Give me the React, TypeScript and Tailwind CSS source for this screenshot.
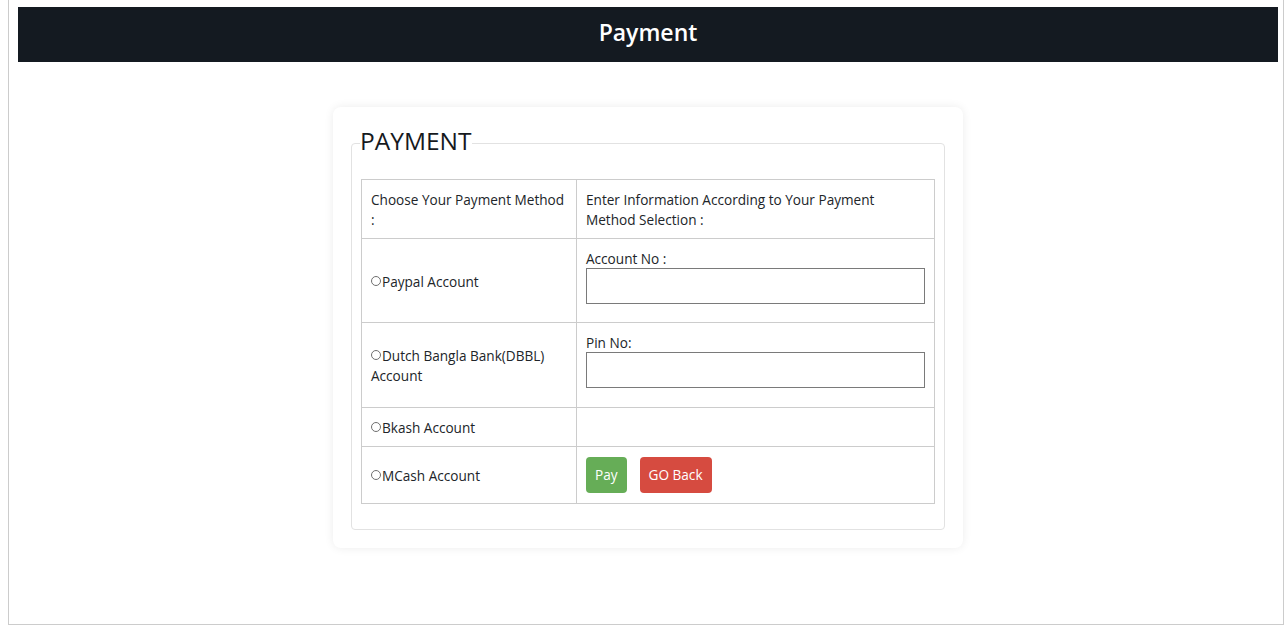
import React from 'react';

const methods = ['Paypal Account', 'Dutch Bangla Bank(DBBL) Account', 'Bkash Account', 'MCash Account'];

function Radio({ label }: { label: string }) {
  return (
    <span>
      <span className="inline-block w-[10px] h-[10px] rounded-full border border-[#6f6f6f] bg-white mr-px mb-[1px]"></span>
      {label}
    </span>
  );
}

function App() {
  return (
    <div className="bg-white font-['Open_Sans','Noto_Sans',sans-serif] text-[#212529] text-[13.6px] leading-[20px]">
      <div className="ml-2 w-[1276px] h-[625px] border-l border-r border-b border-[#cccccc] pl-[9px] pr-[5px] pt-[7px]">
        <div className="w-[1260px]">
          <div className="h-[55px] bg-[#141a21] flex items-center justify-center pb-[4px]">
            <h1 className="text-white text-[23px] font-semibold leading-none">Payment</h1>
          </div>

          <div className="mx-auto mt-[45px] w-[630px] rounded-lg bg-white shadow-[0_0_10px_rgba(0,0,0,0.08)] px-[18px] pt-[20px] pb-[18px]">
            <fieldset className="border border-[#e2e2e2] rounded pl-[9px] pr-[8px] pb-[25px]">
              <legend className="text-[24.5px] leading-[28px] pb-[4px] font-medium text-[#16191d] ml-[-1px]">PAYMENT</legend>
              <table className="mt-[20px] w-[574px] border-collapse">
                <tbody>
                  <tr className="h-[59px]">
                    <td className="w-[215px] border border-[#cccccc] px-[9px] pt-[10px] pb-[8px] align-middle">
                      Choose Your Payment Method :
                    </td>
                    <td className="border border-[#cccccc] px-[9px] pt-[10px] pb-[8px] align-middle">
                      Enter Information According to Your Payment Method Selection :
                    </td>
                  </tr>
                  <tr className="h-[84px]">
                    <td className="border border-[#cccccc] px-[9px] pt-[2px] align-middle">
                      <Radio label={methods[0]} />
                    </td>
                    <td className="border border-[#cccccc] px-[9px] pt-[10px] pb-[9px] align-top">
                      <div className="leading-[19px]">Account No :</div>
                      <input type="text" className="block w-full h-[36px] border border-[#7a7a7a] bg-white mb-[9px]" />
                    </td>
                  </tr>
                  <tr className="h-[85px]">
                    <td className="border border-[#cccccc] px-[9px] pt-[2px] align-middle">
                      <Radio label={methods[1]} />
                    </td>
                    <td className="border border-[#cccccc] px-[9px] pt-[10px] pb-[9px] align-top">
                      <div className="leading-[19px]">Pin No:</div>
                      <input type="password" className="block w-full h-[36px] border border-[#7a7a7a] bg-white mb-[9px]" />
                    </td>
                  </tr>
                  <tr className="h-[39px]">
                    <td className="border border-[#cccccc] px-[9px] pt-[10px] pb-[8px] align-middle">
                      <Radio label={methods[2]} />
                    </td>
                    <td className="border border-[#cccccc] px-[9px] py-[9px]"></td>
                  </tr>
                  <tr className="h-[57px]">
                    <td className="border border-[#cccccc] px-[9px] pt-[2px] align-middle">
                      <Radio label={methods[3]} />
                    </td>
                    <td className="border border-[#cccccc] px-[9px] py-[10px] align-middle">
                      <div className="flex gap-[13px]">
                        <button className="h-[36px] px-[9px] rounded bg-[#66ad57] text-white">Pay</button>
                        <button className="h-[36px] px-[9px] rounded bg-[#d64b40] text-white">GO Back</button>
                      </div>
                    </td>
                  </tr>
                </tbody>
              </table>
            </fieldset>
          </div>
        </div>
      </div>
    </div>
  );
}

export default App;
